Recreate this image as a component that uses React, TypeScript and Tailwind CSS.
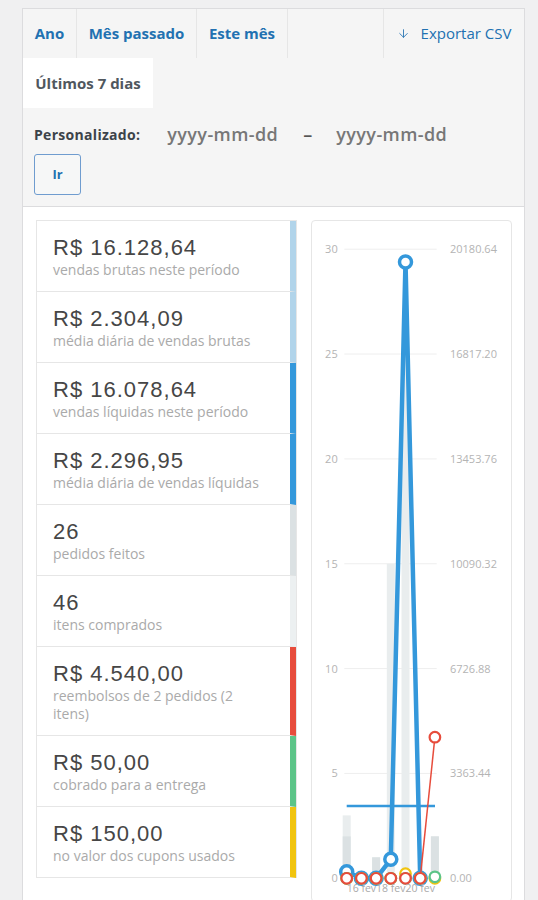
import { ArrowDown } from "lucide-react";

const stats = [
  { value: "R$ 16.128,64", label: "vendas brutas neste período", bar: "border-r-[#b1d4ea]" },
  { value: "R$ 2.304,09", label: "média diária de vendas brutas", bar: "border-r-[#b1d4ea]" },
  { value: "R$ 16.078,64", label: "vendas líquidas neste período", bar: "border-r-[#3498db]" },
  { value: "R$ 2.296,95", label: "média diária de vendas líquidas", bar: "border-r-[#3498db]" },
  { value: "26", label: "pedidos feitos", bar: "border-r-[#dbe1e3]" },
  { value: "46", label: "itens comprados", bar: "border-r-[#ecf0f1]" },
  { value: "R$ 4.540,00", label: "reembolsos de 2 pedidos (2 itens)", bar: "border-r-[#e74c3c]" },
  { value: "R$ 50,00", label: "cobrado para a entrega", bar: "border-r-[#5cc488]" },
  { value: "R$ 150,00", label: "no valor dos cupons usados", bar: "border-r-[#f1c40f]" },
];

// chart geometry (svg coords inside the card)
const X = (i: number) => 34.7 + i * 14.7;
const Y = (v: number) => 657.3 - v * 20.97;

const leftTicks = [30, 25, 20, 15, 10, 5, 0];
const rightTicks = ["20180.64", "16817.20", "13453.76", "10090.32", "6726.88", "3363.44", "0.00"];

const items = [3, 0, 1, 15, 25, 0, 2];
const orders = [2, 0, 1, 0, 0, 0, 2];
const net = [0.31, 0, 0, 0.906, 29.39, 0];
const refunds = [0, 0, 0, 0, 0, 0, 6.73];
const coupons = [0, 0, 0, 0, 0.22, 0, 0];
const shipping = [0, 0, 0, 0, 0, 0, 0.07];

const Chart = () => {
  const netPts = net.map((v, i) => `${X(i)},${Y(v)}`).join(" ");

  return (
    <svg width="199" height="680" viewBox="0 0 199 680" className="block">
      {leftTicks.map((t, k) => (
        <g key={t}>
          <line x1="32.3" x2="124.7" y1={Y(t)} y2={Y(t)} stroke="#eeeeee" strokeWidth="1" />
          <text x="25.7" y={Y(t) + 4} textAnchor="end" fontSize="11" fill="#b4b4b4" fontFamily="Open Sans, sans-serif">
            {t}
          </text>
          <text x="138" y={Y(t) + 4} fontSize="11" fill="#b4b4b4" fontFamily="Open Sans, sans-serif">
            {rightTicks[k]}
          </text>
        </g>
      ))}

      {items.map((v, i) =>
        v > 0 ? <rect key={"it" + i} x={X(i) - 4} y={Y(v)} width="8" height={Y(0) - Y(v)} fill="#e9edee" /> : null
      )}
      {orders.map((v, i) =>
        v > 0 ? <rect key={"or" + i} x={X(i) - 4} y={Y(v)} width="8" height={Y(0) - Y(v)} fill="#dbe1e3" /> : null
      )}

      {/* average line */}
      <line x1="34.7" x2="123" y1="585" y2="585" stroke="#3498db" strokeWidth="2.5" />

      <polyline points={netPts} fill="none" stroke="#3498db" strokeWidth="4.5" strokeLinejoin="round" />
      {net.map((v, i) => (
        <circle key={"n" + i} cx={X(i)} cy={Y(v)} r="6" fill="#fff" stroke="#3498db" strokeWidth="3.5" />
      ))}

      {coupons.map((v, i) => (
        <circle key={"c" + i} cx={X(i)} cy={Y(v)} r="5.3" fill="#fff" stroke="#f1c40f" strokeWidth="2.2" />
      ))}
      {shipping.map((v, i) => (
        <circle key={"s" + i} cx={X(i)} cy={Y(v)} r="5.3" fill="#fff" stroke="#5cc488" strokeWidth="2.2" />
      ))}

      <line x1={X(5)} y1={Y(0)} x2={X(6)} y2={Y(6.73)} stroke="#e74c3c" strokeWidth="1.5" />
      {refunds.map((v, i) => (
        <circle key={"r" + i} cx={X(i)} cy={Y(v)} r="5.3" fill="#fff" stroke="#e74c3c" strokeWidth="2.2" />
      ))}

      {[
        ["16 fev", 1],
        ["18 fev", 3],
        ["20 fev", 5],
      ].map(([t, i]) => (
        <text key={t as string} x={X(i as number)} y="671" textAnchor="middle" fontSize="10.5" fill="#aaaaaa" fontFamily="Open Sans, sans-serif">
          {t}
        </text>
      ))}
    </svg>
  );
};

const App = () => {
  return (
    <div className="min-h-[900px] bg-[#f0f0f1] pl-[22px] pr-[13px] pt-[8px] font-['Open_Sans',sans-serif]">
      <div className="border border-[#dcdcde] bg-white">
        <div className="border-b border-[#dcdcde] bg-[#f5f5f5]">
          <div className="flex h-[49px]">
            <a className="flex w-[54px] items-center justify-center border-r border-[#e6e6e6] text-[15px] font-bold text-[#2271b1]">
              Ano
            </a>
            <a className="flex w-[120px] items-center justify-center border-r border-[#e6e6e6] text-[15px] font-bold text-[#2271b1]">
              Mês passado
            </a>
            <a className="flex w-[91px] items-center justify-center border-r border-[#e6e6e6] text-[15px] font-bold text-[#2271b1]">
              Este mês
            </a>
            <div className="flex-1" />
            <a className="flex w-[141px] items-center justify-center gap-[11px] border-l border-[#e6e6e6] text-[15px] text-[#2271b1]">
              <ArrowDown size={13} strokeWidth={1.6} />
              Exportar CSV
            </a>
          </div>
          <div className="flex h-[50px]">
            <div className="flex w-[130px] items-center justify-center bg-white text-[15px] font-bold text-[#50575e]">
              Últimos 7 dias
            </div>
          </div>
          <div className="pb-[11px] pl-[11px] pt-[12px]">
            <div className="flex h-[28px] items-center">
              <span className="text-[14px] font-bold tracking-[0.3px] text-[#3c434a]">Personalizado:</span>
              <input
                readOnly
                placeholder="yyyy-mm-dd"
                className="ml-[27px] w-[114px] bg-transparent text-[18px] font-semibold tracking-[0.4px] text-[#777] outline-none placeholder:text-[#777]"
              />
              <span className="ml-[22px] text-[18px] font-semibold text-[#555]">–</span>
              <input
                readOnly
                placeholder="yyyy-mm-dd"
                className="ml-[24px] w-[114px] bg-transparent text-[18px] font-semibold tracking-[0.4px] text-[#777] outline-none placeholder:text-[#777]"
              />
            </div>
            <button className="mt-[6px] h-[41px] w-[47px] rounded-[3px] border border-[#6f9ccf] bg-[#f6f7f7] text-[13px] font-bold text-[#2271b1]">
              Ir
            </button>
          </div>
        </div>

        <div className="flex items-start gap-[14px] pl-[13px] pr-[12px] pt-[13px]">
          <ul className="w-[261px] border-x border-t border-[#e6e6e6]">
            {stats.map((s) => (
              <li key={s.label} className={`border-b border-b-[#e6e6e6] border-r-[6px] ${s.bar} pb-[12px] pl-[16px] pr-[22px] pt-[14px]`}>
                <div className="font-['Liberation_Sans',Arial,sans-serif] text-[22px] leading-[26px] tracking-[1px] text-[#464646]">
                  {s.value}
                </div>
                <div className="text-[14px] leading-[18px] text-[#aaaaaa]">{s.label}</div>
              </li>
            ))}
          </ul>
          <div className="w-[201px] rounded-[4px] border border-[#e6e6e6] bg-white">
            <Chart />
          </div>
        </div>
      </div>
    </div>
  );
};

export default App;
